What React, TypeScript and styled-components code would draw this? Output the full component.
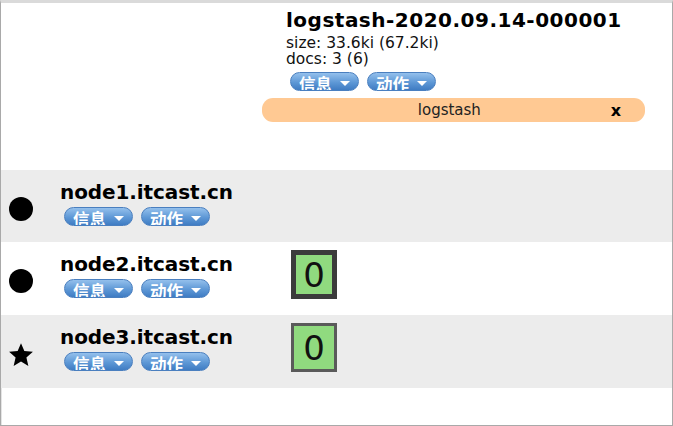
import React from 'react'
import styled, { createGlobalStyle } from 'styled-components'

const GlobalStyle = createGlobalStyle`
  html, body {
    margin: 0;
    padding: 0;
    background: #fff;
  }
  body {
    font-family: "DejaVu Sans", Verdana, sans-serif;
    color: #000;
  }
`

const Frame = styled.div`
  width: 673px;
  height: 426px;
  box-sizing: border-box;
  border: 1px solid #a9a9a9;
  border-top: 3px solid #dadada;
  box-shadow: inset 1px 0 0 #e4e4e4;
  overflow: hidden;
  background: #fff;
`

const Row = styled.div<{ $shaded?: boolean; $height: number }>`
  display: flex;
  height: ${(p) => p.$height}px;
  background: ${(p) => (p.$shaded ? '#ececec' : '#fff')};
`

const NodeCell = styled.div`
  width: 261px;
  flex-shrink: 0;
  display: flex;
  align-items: flex-start;
`

const IndexCell = styled.div`
  width: 383px;
  flex-shrink: 0;
  display: flex;
  flex-direction: column;
`

const IndexHead = styled.div`
  padding: 5px 0 0 24px;
`

const Title = styled.div<{ $spacing?: number }>`
  font-weight: bold;
  font-size: 20px;
  line-height: 24px;
  letter-spacing: ${(p) => p.$spacing ?? 0}px;
  white-space: nowrap;
`

const MetaList = styled.div`
  margin-top: 3px;
`

const Meta = styled.div`
  font-size: 15.5px;
  line-height: 16px;
  color: #111;
  white-space: nowrap;
`

const Buttons = styled.div`
  display: flex;
  gap: 8px;
  margin-top: 5px;
  padding-left: 4px;
`

const PillButton = styled.div`
  width: 69px;
  height: 19px;
  box-sizing: border-box;
  border-radius: 10px;
  border: 1px solid #4a7fbf;
  background: linear-gradient(#94c0ec, #5e98d6 55%, #3f7cc3);
  color: #fff;
  display: flex;
  align-items: flex-start;
  justify-content: center;
  gap: 8px;
  overflow: hidden;
  font-family: "Noto Sans CJK SC", sans-serif;
  font-weight: bold;
  font-size: 16.5px;
  line-height: 16px;
  padding-top: 3px;
`

const Caret = styled.span`
  width: 0;
  height: 0;
  margin-top: 5px;
  border-left: 5px solid transparent;
  border-right: 5px solid transparent;
  border-top: 5px solid #fff;
`

const AliasBar = styled.div`
  margin-top: 7px;
  height: 24px;
  border-radius: 11px;
  background: #ffc993;
  display: flex;
  align-items: center;
  font-size: 15px;
`

const AliasName = styled.span`
  flex: 1;
  text-align: center;
  padding-left: 26px;
  color: #222;
`

const AliasClose = styled.span`
  font-weight: bold;
  font-size: 16px;
  padding-right: 24px;
`

const NodeIcon = styled.div`
  width: 26px;
  height: 26px;
  margin: 26px 0 0 7px;
  flex-shrink: 0;
  display: flex;
  align-items: center;
  justify-content: center;
`

const Dot = styled.div`
  width: 24px;
  height: 24px;
  border-radius: 50%;
  background: #000;
`

const NodeInfo = styled.div`
  margin: 10px 0 0 26px;
  display: flex;
  flex-direction: column;
`

const NodeButtons = styled(Buttons)`
  margin-top: 3px;
`

const ShardCell = styled.div`
  width: 383px;
  flex-shrink: 0;
  padding: 8px 0 0 29px;
  box-sizing: border-box;
`

const Shard = styled.div<{ $primary?: boolean }>`
  width: 46px;
  height: 49px;
  box-sizing: border-box;
  border: ${(p) => (p.$primary ? '5px solid #3b3b3b' : '3px solid #5a5a5a')};
  background: #90da7f;
  display: flex;
  align-items: center;
  justify-content: center;
  font-size: 34px;
  line-height: 34px;
  color: #111;
`

const ActionButtons = () => (
  <>
    <PillButton>
      信息<Caret />
    </PillButton>
    <PillButton>
      动作<Caret />
    </PillButton>
  </>
)

const Star = () => (
  <svg width="29" height="29" viewBox="0 0 24 24">
    <path
      d="M12 1.5l3.1 7.3 7.9.7-6 5.2 1.8 7.8L12 18.4l-6.8 4.1L7 14.7 1 9.5l7.9-.7z"
      fill="#000"
    />
  </svg>
)

const nodes = [
  { name: 'node1.itcast.cn', master: false, shard: null as null | boolean },
  { name: 'node2.itcast.cn', master: false, shard: true },
  { name: 'node3.itcast.cn', master: true, shard: false },
]

export default function App() {
  return (
    <Frame>
      <GlobalStyle />
      <Row $height={167}>
        <NodeCell />
        <IndexCell>
          <IndexHead>
            <Title $spacing={0.5}>logstash-2020.09.14-000001</Title>
            <MetaList>
              <Meta>size: 33.6ki (67.2ki)</Meta>
              <Meta>docs: 3 (6)</Meta>
            </MetaList>
            <Buttons>
              <ActionButtons />
            </Buttons>
          </IndexHead>
          <AliasBar>
            <AliasName>logstash</AliasName>
            <AliasClose>x</AliasClose>
          </AliasBar>
        </IndexCell>
      </Row>
      {nodes.map((n, i) => (
        <Row key={n.name} $height={i === 0 ? 72 : 73} $shaded={i % 2 === 0}>
          <NodeCell>
            <NodeIcon>{n.master ? <Star /> : <Dot />}</NodeIcon>
            <NodeInfo>
              <Title $spacing={-0.1}>{n.name}</Title>
              <NodeButtons>
                <ActionButtons />
              </NodeButtons>
            </NodeInfo>
          </NodeCell>
          <ShardCell>{n.shard !== null && <Shard $primary={n.shard}>0</Shard>}</ShardCell>
        </Row>
      ))}
    </Frame>
  )
}
